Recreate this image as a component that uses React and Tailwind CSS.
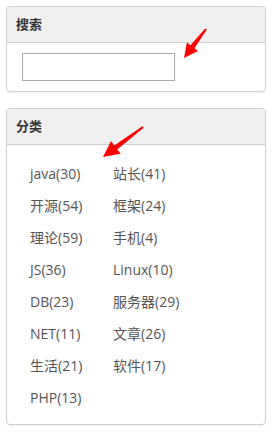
import React from 'react'

const categories = [
  ['java(30)', '站长(41)'],
  ['开源(54)', '框架(24)'],
  ['理论(59)', '手机(4)'],
  ['JS(36)', 'Linux(10)'],
  ['DB(23)', '服务器(29)'],
  ['NET(11)', '文章(26)'],
  ['生活(21)', '软件(17)'],
  ['PHP(13)', null],
]

const font = { fontFamily: '"Open Sans", "Noto Sans CJK SC", sans-serif' }

const Panel = ({ title, children, className = '' }) => (
  <div className={`w-[260px] border border-[#cfcfcf] rounded-[4px] bg-white shadow-[0_1px_2px_rgba(0,0,0,0.06)] overflow-hidden ${className}`}>
    <div className="h-[36px] bg-[#f0f0f0] border-b border-[#cfcfcf] flex items-center pl-[9px]">
      <span className="text-[13px] font-bold text-[#333]" style={font}>{title}</span>
    </div>
    {children}
  </div>
)

const Arrows = () => (
  <svg className="absolute left-0 top-0 pointer-events-none" width="275" height="432">
    <polygon
      fill="#f00"
      points="184,58 198.1,51 194.5,48.3 206.8,29.6 205.2,28.4 190.5,45.3 186.9,42.6"
    />
    <polygon
      fill="#f00"
      points="103,157 120.6,153.8 117.3,149.4 143.6,127.8 142.4,126.2 114.3,145.4 111,141"
    />
  </svg>
)

export default function App() {
  return (
    <div className="relative w-[275px] h-[432px] bg-white pt-[6px] pl-[6px]" style={font}>
      <Panel title="搜索">
        <div className="pt-[10px] pb-[10px] pl-[15px]">
          <input className="block w-[153px] h-[28px] border border-[#aaa] bg-white outline-none" />
        </div>
      </Panel>

      <Panel title="分类" className="mt-[16px]">
        <div className="pt-[12px] pb-[11px] pl-[23px]">
          {categories.map((row, i) => (
            <div key={i} className="flex h-[32px] items-center text-[14px] text-[#555]">
              <span className="w-[83px]">{row[0]}</span>
              {row[1] && <span>{row[1]}</span>}
            </div>
          ))}
        </div>
      </Panel>

      <Arrows />
    </div>
  )
}
